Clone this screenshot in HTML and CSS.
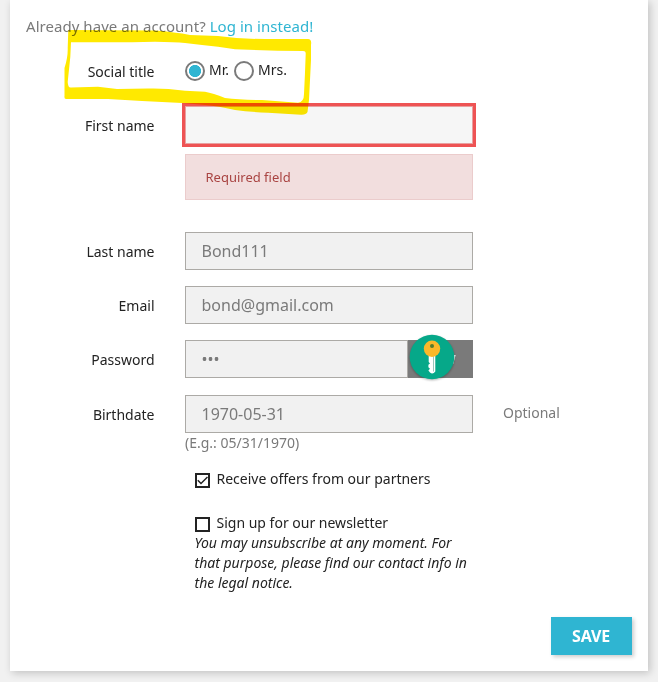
FILE: index.html
```html
<!DOCTYPE html>
<html lang="en">
<head>
<meta charset="utf-8">
<title>Personal information</title>
<link rel="stylesheet" href="styles.css">
</head>
<body>
<main class="card">
  <p class="intro">Already have an account? <a class="link" href="#">Log in instead!</a></p>
  <form class="form">
    <div class="row row-title">
      <span class="label">Social title</span>
      <div class="radios">
        <span class="radio radio-on"></span><span class="radio-text">Mr.</span>
        <span class="radio"></span><span class="radio-text">Mrs.</span>
      </div>
    </div>
    <div class="row row-first">
      <span class="label">First name</span>
      <div>
        <div class="field field-error"></div>
        <div class="alert">Required field</div>
      </div>
    </div>
    <div class="row row-last">
      <span class="label">Last name</span>
      <div class="field">Bond111</div>
    </div>
    <div class="row">
      <span class="label">Email</span>
      <div class="field">bond@gmail.com</div>
    </div>
    <div class="row">
      <span class="label">Password</span>
      <div class="group">
        <div class="field field-pass">•••</div>
        <div class="show">SHOW</div>
        <svg class="key" width="48" height="48" viewBox="0 0 48 48">
          <circle class="key-disc" cx="24" cy="24" r="22.3"/>
          <path class="key-stem" d="M20.700 22h6.600v16.500q-2.500 3.300-5.300 1l-1.600-2 1.600-1.700-1.600-1.500v-2.500l1.600-1.300-1.300-1.500z"/>
          <path class="key-line" d="M25.500 23v15.500"/>
          <circle class="key-head" cx="24" cy="15.700" r="8.200"/>
          <circle class="key-hole" cx="24" cy="12.900" r="2"/>
        </svg>
      </div>
    </div>
    <div class="row row-birth">
      <span class="label">Birthdate</span>
      <div>
        <div class="field">1970-05-31</div>
        <div class="hint">(E.g.: 05/31/1970)</div>
      </div>
      <span class="optional">Optional</span>
    </div>
    <div class="checks">
      <div class="check">
        <span class="box"><svg class="tick" width="11" height="11" viewBox="0 0 11 11"><path d="M.8 5.2 4 8.5 10.5 2"/></svg></span>
        <span>Receive offers from our partners</span>
      </div>
      <div class="check check-news">
        <span class="box"></span>
        <span>Sign up for our newsletter</span>
      </div>
      <em class="note">You may unsubscribe at any moment. For<br>that purpose, please find our contact info in<br>the legal notice.</em>
    </div>
    <button class="save" type="button">SAVE</button>
  </form>
  <svg class="marker" width="260" height="96" viewBox="60 24 260 96">
    <path fill-rule="evenodd" d="M68.300 30L155 30.500Q175 32 190 35L218 36Q240 39 265 39L308 39Q312 39 311 45L311 60L309 100L307.500 112Q306 115 301 114.700L268 112.700Q250 112 235 110Q218 106 205 105L182 103L142 101L108 99L66 99Q64 99 64.500 96L64.500 68Q68 57 67.700 48ZM71 42.300L132 42.300L155 41.700Q175 42 185 43L202 45L218 46.700L235 49.300L278 50.700L303 51Q306 51 305.700 54Q305 75 304 94Q304 102 298 102.700L262 100Q240 100 225 98Q213 93 205 91.700L185 90.700Q165 88 148 88.500L117 89L98 86.700L71 87.500Q68 88 67.700 82L70.300 57Z"/>
  </svg>
</main>
</body>
</html>
```
FILE: styles.css
```css
* { box-sizing: border-box; }
body {
  margin: 0;
  height: 682px;
  overflow: hidden;
  background: #f1f1f1;
  font: 14px/20px "Noto Sans", sans-serif;
  color: #232323;
}
.card {
  position: relative;
  width: 638px;
  height: 671px;
  margin-left: 10px;
  padding: 15px 16px;
  background: #fff;
  box-shadow: 2px 2px 8px rgba(0, 0, 0, .2);
}
.intro {
  margin: 0;
  font-size: 15px;
  line-height: 22px;
  letter-spacing: .045px;
  color: #7a7a7a;
}
.link { color: #2fb5d2; text-decoration: none; }
.form { display: flex; flex-direction: column; }
.row {
  display: grid;
  grid-template-columns: 129px 288px 1fr;
  column-gap: 30px;
  margin-bottom: 16px;
}
.label { padding: 10px .5px 0 0; text-align: right; }
.row-title { height: 20px; margin: 15px 0 34px; }
.radios { display: flex; align-items: center; height: 38px; }
.radio {
  width: 20px;
  height: 20px;
  border: 2px solid #7a7a7a;
  border-radius: 50%;
}
.radio-on { background: radial-gradient(circle, #2fb5d2 5.700px, #fff 6.400px); }
.radio-text { margin: -2px 5px 0 4px; }
.row-first { margin-bottom: 32px; }
.field {
  height: 38px;
  padding: 0 15.500px;
  border: 1px solid #acaaa6;
  background: #f1f1f1;
  font-size: 16px;
  line-height: 36px;
  color: #7a7a7a;
}
.field-error {
  border-color: #e8a0a0;
  background: #f6f6f6;
  outline: 3px solid #ee5354;
}
.alert {
  height: 46px;
  margin-top: 10px;
  padding-left: 19.500px;
  border: 1px solid #ebcccc;
  background: #f2dede;
  font-size: 13px;
  line-height: 44px;
  color: #a94442;
}
.group { position: relative; display: flex; }
.field-pass { width: 223px; }
.show {
  width: 65px;
  padding-right: 9px;
  background: #7a7a7a;
  color: #fff;
  font-size: 13px;
  font-weight: 600;
  line-height: 38px;
  text-align: center;
}
.key { position: absolute; left: 223px; top: -7px; filter: drop-shadow(0 1px 1px rgba(0, 0, 0, .3)); }
.key-disc { fill: #06a889; }
.key-stem { fill: #fff; }
.key-line { stroke: #9bc5bb; stroke-width: 1; }
.key-head { fill: #fbb829; }
.key-hole { fill: #557b2c; }
.row-birth { margin: 1px 0 0; }
.hint { color: #7a7a7a; }
.optional { padding-top: 8px; color: #7a7a7a; }
.checks { margin: 16px 0 0 169px; }
.check { display: flex; align-items: center; gap: 6.500px; }
.check-news { margin-top: 24px; }
.box {
  width: 15px;
  height: 15px;
  margin-top: 3px;
  border: 2px solid #232323;
}
.tick { display: block; fill: none; stroke: #232323; stroke-width: 1.500; }
.note { display: block; margin-left: -.5px; }
.save {
  align-self: flex-end;
  width: 81px;
  height: 38px;
  margin-top: 24px;
  padding: 0 1px 0 0;
  border: 0;
  background: #2fb5d2;
  box-shadow: 2px 2px 4px rgba(0, 0, 0, .2);
  color: #fff;
  font: 700 16px "Noto Sans", sans-serif;
  letter-spacing: -.2px;
}
.marker {
  position: absolute;
  left: 50px;
  top: 24px;
  fill: #ffe900;
  mix-blend-mode: multiply;
  pointer-events: none;
}
```
